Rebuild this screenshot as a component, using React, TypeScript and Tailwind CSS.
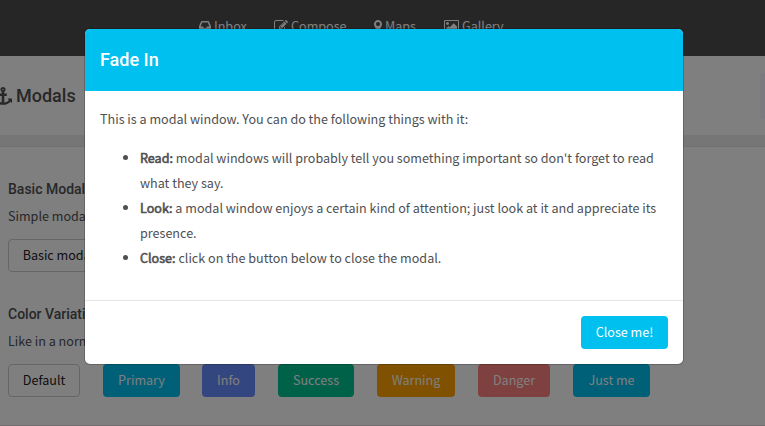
import React from 'react';

const body = "font-['Noto_Sans_CJK_SC','Noto_Sans',sans-serif]";
const head = "font-['Roboto',sans-serif]";

const variants = [
  { label: 'Primary', cls: 'ml-[23px] w-[77px] bg-[#00c0f0]' },
  { label: 'Info', cls: 'ml-[22px] w-[53px] bg-[#688cff]' },
  { label: 'Success', cls: 'ml-[23px] w-[76px] bg-[#00c292]' },
  { label: 'Warning', cls: 'ml-[23px] w-[78px] bg-[#ffa200]' },
  { label: 'Danger', cls: 'ml-[23px] w-[72px] bg-[#ff8080]' },
  { label: 'Just me', cls: 'ml-[23px] w-[77px] bg-[#00c0f0]' },
];

function NavItem({ icon, label, cls }: { icon: React.ReactNode; label: string; cls: string }) {
  return (
    <a className={`flex h-5 items-center whitespace-nowrap leading-5 text-white ${cls}`}>
      {icon}
      <span>{label}</span>
    </a>
  );
}

function PictureIcon() {
  return (
    <svg className="mr-[3px] h-[14px] w-[15px] shrink-0" viewBox="0 0 1920 1792" fill="currentColor">
      <path d="M640 576q0 80-56 136t-136 56-136-56-56-136 56-136 136-56 136 56 56 136zm1024 384v448H256v-192l320-320 160 160 512-512zm96-704H160q-13 0-22.500 9.500T128 288v1216q0 13 9.500 22.500t22.500 9.500h1600q13 0 22.500-9.500t9.500-22.500V288q0-13-9.500-22.500T1760 256zm160 32v1216q0 66-47 113t-113 47H160q-66 0-113-47T0 1504V288q0-66 47-113t113-47h1600q66 0 113 47t47 113z" />
    </svg>
  );
}

function MarkerIcon() {
  return (
    <svg className="mr-[3px] h-[14px] w-2 shrink-0" viewBox="0 0 1024 1792" fill="currentColor">
      <path d="M768 640q0-106-75-181t-181-75-181 75-75 181 75 181 181 75 181-75 75-181zm256 0q0 109-33 179l-364 774q-16 33-47.500 52t-67.500 19-67.500-19-46.500-52L33 819Q0 749 0 640q0-212 150-362t362-150 362 150 150 362z" />
    </svg>
  );
}

function PencilSquareIcon() {
  return (
    <svg className="mr-[3px] h-[14px] w-[14px] shrink-0" viewBox="0 0 1792 1792" fill="currentColor">
      <path d="M888 1184l116-116-152-152-116 116v56h96v96h56zm440-720q-16-16-33 1L945 815q-17 17-1 33t33-1l350-350q17-17 1-33zm80 594v190q0 119-84.500 203.500T1120 1536H288q-119 0-203.500-84.500T0 1248V416q0-119 84.500-203.500T288 128h832q63 0 117 25 15 7 18 23 3 17-9 29l-49 49q-14 14-32 8-23-6-45-6H288q-66 0-113 47t-47 113v832q0 66 47 113t113 47h832q66 0 113-47t47-113v-126q0-13 9-22l64-64q15-15 35-7t20 29zm-96-738l288 288-672 672H640V992zm444 132l-92 92-288-288 92-92q28-28 68-28t68 28l152 152q28 28 28 68t-28 68z" />
    </svg>
  );
}

function InboxIcon() {
  return (
    <svg className="mr-[3px] h-[14px] w-3 shrink-0" viewBox="0 0 1536 1792" fill="currentColor">
      <path d="M1023 960h316q-1-3-2.500-8.500t-2.500-7.500l-212-496H414L202 944q-1 3-2.500 8t-2.500 8h316l95 192h320zm513 30v482q0 26-19 45t-45 19H64q-26 0-45-19t-19-45V990q0-62 25-123l238-552q10-25 36.500-42t52.500-17h832q26 0 52.500 17t36.500 42l238 552q25 61 25 123z" />
    </svg>
  );
}

function AnchorIcon() {
  return (
    <svg className="-ml-[6px] mr-1 h-[18px] w-[18px] shrink-0" viewBox="0 0 1792 1792" fill="currentColor">
      <path d="M960 256q0-26-19-45t-45-19-45 19-19 45 19 45 45 19 45-19 19-45zm832 928v352q0 22-20 30-8 2-12 2-12 0-23-9l-93-93q-119 143-318.500 226.500t-429.500 83.500-429.500-83.500-318.500-226.500l-93 93q-9 9-23 9-4 0-12-2-20-8-20-30v-352q0-14 9-23t23-9h352q22 0 30 20 8 19-7 35l-100 100q67 91 189.500 153.500t271.500 82.500v-647h-192q-26 0-45-19t-19-45v-128q0-26 19-45t45-19h192v-163q-58-34-93-92.500t-35-128.500q0-106 75-181t181-75 181 75 75 181q0 70-35 128.500t-93 92.500v163h192q26 0 45 19t19 45v128q0 26-19 45t-45 19h-192v647q149-20 271.500-82.500t189.500-153.500l-100-100q-15-16-7-35 8-20 30-20h352q14 0 23 9t9 23z" />
    </svg>
  );
}

function Strong({ children }: { children: React.ReactNode }) {
  return <strong className="font-normal [-webkit-text-stroke:0.6px_currentColor]">{children}</strong>;
}

export default function App() {
  return (
    <div className={`relative h-[426px] w-[765px] overflow-hidden bg-white text-[12.58px] text-[#4f5052] ${body}`}>
      <header className="flex h-14 bg-[#4c4c4c] pt-4">
        <NavItem cls="ml-[199px] w-[75px]" label="Inbox" icon={<InboxIcon />} />
        <NavItem cls="w-[100px]" label="Compose" icon={<PencilSquareIcon />} />
        <NavItem cls="w-[70px]" label="Maps" icon={<MarkerIcon />} />
        <NavItem cls="" label="Gallery" icon={<PictureIcon />} />
      </header>

      <section className="flex h-[79px] items-center justify-between">
        <h1 className={`flex items-center text-lg font-medium ${head}`}>
          <AnchorIcon />
          Modals
        </h1>
        <div className="h-[46px] w-[5px] rounded-l bg-[#f6f4ff]" />
      </section>
      <div className="h-3 border-b border-[#e2e2e2] bg-[#ececec]" />

      <main className="h-[279px] border-b border-[#dcd8d8] pl-2 pt-8">
        <h2 className={`text-sm leading-5 font-medium ${head}`}>Basic Modals</h2>
        <p className="mt-[7px] leading-5">Simple modal windows</p>
        <button className="mt-[13px] flex h-[33px] w-[101px] items-center justify-center rounded-[4px] border border-[#ccc] pb-[2px] leading-[18px] text-[#222]">Basic modal</button>
        <h2 className={`mt-8 text-sm leading-5 font-medium ${head}`}>Color Variations</h2>
        <p className="mt-[7px] leading-5">Like in a normal modal</p>
        <div className="mt-[13px] flex">
          <button className="h-[33px] w-[72px] rounded-[4px] border border-[#ccc] pb-[2px] leading-[18px] text-[#222]">Default</button>
          {variants.map((v) => (
            <button key={v.label} className={`h-[33px] rounded-[4px] pb-[2px] leading-[18px] text-white ${v.cls}`}>
              {v.label}
            </button>
          ))}
        </div>
      </main>

      <div className="absolute inset-0 bg-black/50" />

      <div className="absolute left-[85px] top-[29px] w-[598px] overflow-hidden rounded-[5px] bg-white shadow-[0_0_0_1px_rgba(0,0,0,0.2)]">
        <div className="flex h-[62px] items-center bg-[#00c0f0] px-[15px]">
          <h3 className={`text-lg font-medium text-white ${head}`}>Fade In</h3>
        </div>
        <div className="h-[209px] px-[15px] pt-[15px]">
          <p className="leading-[25px]">This is a modal window. You can do the following things with it:</p>
          <ul className="mt-[14px] list-disc pl-10 leading-[25px]">
            <li><Strong>Read:</Strong> modal windows will probably tell you something important so don't forget to read what they say.</li>
            <li><Strong>Look:</Strong> a modal window enjoys a certain kind of attention; just look at it and appreciate its presence.</li>
            <li><Strong>Close:</Strong> click on the button below to close the modal.</li>
          </ul>
        </div>
        <div className="flex h-16 justify-end border-t border-[#e5e5e5] px-[15px] pt-[15px]">
          <button className="h-[33px] w-[87px] rounded-[4px] bg-[#00c0f0] pb-[2px] leading-[18px] text-white">Close me!</button>
        </div>
      </div>
    </div>
  );
}
